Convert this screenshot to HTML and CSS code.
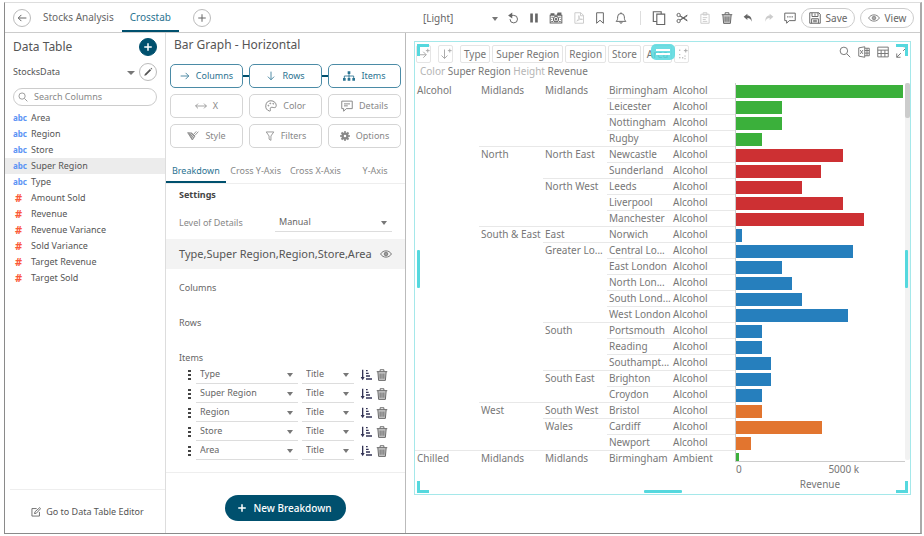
FILE: index.html
```html
<!DOCTYPE html>
<html lang="en">
<head>
<meta charset="utf-8">
<title>Stocks Analysis - Crosstab</title>
<link rel="stylesheet" href="styles.css">
</head>
<body>
<svg class="sprite" aria-hidden="true">
  <symbol id="i-left" viewBox="0 0 16 16"><path d="M15 8H2M7 3L2 8l5 5"/></symbol>
  <symbol id="i-right" viewBox="0 0 16 16"><path d="M1 8h13M9 3l5 5-5 5"/></symbol>
  <symbol id="i-down" viewBox="0 0 16 16"><path d="M8 1v13M3 9l5 5 5-5"/></symbol>
  <symbol id="i-wide" viewBox="0 0 20 16"><path d="M1 8h18M5 4L1 8l4 4M15 4l4 4-4 4"/></symbol>
  <symbol id="i-plus" viewBox="0 0 16 16"><path d="M8 2v12M2 8h12"/></symbol>
  <symbol id="i-pencil" viewBox="0 0 16 16"><path class="solid" d="M2 14l1-3 8-8 2 2-8 8zM12 2l1-1 2 2-1 1z"/></symbol>
  <symbol id="i-search" viewBox="0 0 16 16"><circle cx="6.5" cy="6.5" r="5"/><path d="M10.500 10.500L15 15"/></symbol>
  <symbol id="i-refresh" viewBox="0 0 16 16"><path d="M4 4.500h5a5 5 0 1 1-5 5"/><path class="solid" d="M1.500 4.500L7 .500v8z"/></symbol>
  <symbol id="i-pause" viewBox="0 0 16 16"><path class="solid" d="M3 2h3.500v12H3zM9.500 2H13v12H9.500z"/></symbol>
  <symbol id="i-camera" viewBox="0 0 18 16"><path d="M1.500 4.500h15v10h-15z"/><path class="solid" d="M10 4l1-3h5v3zM2 2h5v2H2z"/><circle cx="9" cy="9.500" r="3.300"/><circle cx="9" cy="9.500" r="1"/><path d="M3 7h2M3 10h1M3 12.500h2M13 7h2M14 10h1M13 12.500h2"/></symbol>
  <symbol id="i-pdf" viewBox="0 0 16 16"><path d="M2.500 1h8l3.500 3.500V15H2.500zM10 1v4h4M5 12c3-2 4-6 3-7s-1 5 4 5c2 0 0-2-7 2z"/></symbol>
  <symbol id="i-bookmark" viewBox="0 0 16 16"><path d="M3.500 1h9v14L8 11l-4.500 4z"/></symbol>
  <symbol id="i-bell" viewBox="0 0 16 16"><path d="M1.500 12.500c2-2 2-3 2-6a4.500 4.500 0 0 1 9 0c0 3 0 4 2 6zM6.500 13.500a1.500 1.500 0 0 0 3 0M8 2V.500"/></symbol>
  <symbol id="i-copy" viewBox="0 0 16 16"><path d="M5.500 3.500h9v12h-9zM5 12H1.500V.800h9V3"/></symbol>
  <symbol id="i-cut" viewBox="0 0 16 16"><circle cx="3.500" cy="4" r="2.200"/><circle cx="3.500" cy="12" r="2.200"/><path d="M5.500 5.500L15 12M5.500 10.500L15 4M5.500 5l9.500 6M5.500 11L15 5"/></symbol>
  <symbol id="i-paste" viewBox="0 0 16 16"><path d="M2.500 3h11v12h-11zM5.500 1h5v3h-5zM5 7.500h6M5 10h4M5 12.500h6"/></symbol>
  <symbol id="i-trash" viewBox="0 0 16 16"><path class="tint" d="M2.500 4h11l-1 11h-9z"/><path d="M1 3.500h14M5.500 3V1h5v2M2.500 4l1 11.200h9l1-11.200M5.500 6v7M8 6v7M10.500 6v7"/></symbol>
  <symbol id="i-undo" viewBox="0 0 16 16"><path class="solid" d="M1 6l6-5v3c5 0 7 4 7 10-1.500-4-3-6-7-6v3z"/></symbol>
  <symbol id="i-comment" viewBox="0 0 16 16"><path d="M1 1.500h14v10H7L3.500 15v-3.500H1zM4 5.200h8M4 7.800h5"/></symbol>
  <symbol id="i-chat" viewBox="0 0 16 16"><path d="M1 1.500h14v10H7L3.500 15v-3.500H1zM4 6.500h2M7 6.500h2M10 6.500h2"/></symbol>
  <symbol id="i-save" viewBox="0 0 16 16"><path d="M1 1h12l2 2v12H1zM4 1v5h8V1M8 2v3M3.500 15V9h9v6M5.500 11h5M5.500 13h5"/></symbol>
  <symbol id="i-eye" viewBox="0 0 20 16"><path d="M1 8c4-7 14-7 18 0-4 7-14 7-18 0z"/><circle cx="10" cy="8" r="3"/><circle cx="10" cy="8" r="1"/></symbol>
  <symbol id="i-tree" viewBox="0 0 18 16"><path class="solid" d="M7 1h4v4H7zM0 11h4v4H0zM7 11h4v4H7zM14 11h4v4h-4z"/><path d="M9 5v6M2 11V8h14v3"/></symbol>
  <symbol id="i-palette" viewBox="0 0 16 16"><path d="M8 1a7 7 0 0 0-2 13.700c2 .3 1-2.200 1-3.200 0-2 2-2 4-1.500 2 .5 4 0 4-2.500C15 4 12 1 8 1z"/><circle cx="4.500" cy="7.500" r=".6"/><circle cx="7" cy="4.500" r=".6"/><circle cx="11" cy="5" r=".6"/></symbol>
  <symbol id="i-brush" viewBox="0 0 18 16"><path class="tint" d="M1 3l6 .5 5 4.500-4 6z"/><path d="M1 3l6 .5 5 4.500-4 6zM4 4l6 7M3 4l5 9M12 7l5-5.500M10 5.500L14 1M6 3.500l5 5"/></symbol>
  <symbol id="i-filter" viewBox="0 0 16 16"><path d="M2 1.500h12L9.500 8v7L6.500 13V8z"/></symbol>
  <symbol id="i-gear" viewBox="0 0 16 16"><path class="solid" d="M6.800 0h2.400v2.200l1.700.7L12.500 1.300l2.200 2.200-1.600 1.600.7 1.700H16v2.400h-2.200l-.7 1.700 1.600 1.600-2.200 2.200-1.600-1.600-1.700.7V16H6.800v-2.200l-1.700-.7-1.600 1.600-2.200-2.200 1.600-1.600-.7-1.700H0V6.800h2.200l.7-1.700-1.600-1.600 2.200-2.200 1.600 1.600 1.700-.7z"/><circle class="hole" cx="8" cy="8" r="2"/></symbol>
  <symbol id="i-sort" viewBox="0 0 18 16"><path class="thick" d="M4 0v13"/><path class="solid" d="M1 11h6l-3 5z"/><path class="thick" d="M9 1.500h2.500M9 5.500h4M9 9.500h6M9 14h9"/></symbol>
  <symbol id="i-edit" viewBox="0 0 16 16"><path d="M9 2.500H1.500v12h12V8M5.500 10.500l1-3L14 1l1.500 1.500L8.500 10z"/></symbol>
  <symbol id="i-addcol" viewBox="0 0 16 16"><path d="M1 9h10M7 5l4 4-4 4M13 1v5M10.500 3.500h5"/></symbol>
  <symbol id="i-addrow" viewBox="0 0 16 16"><path d="M6 2v12M2 10l4 4 4-4M13 1v5M10.500 3.500h5"/></symbol>
  <symbol id="i-additem" viewBox="0 0 16 16"><path d="M5 2v2M5 8v1.500M9 12v2M4 13h2M13 1v5M10.500 3.500h5M12 10v1.500M12 13.500v1.500"/></symbol>
  <symbol id="i-excel" viewBox="0 0 16 16"><path d="M1 2.500L9 1v14L1 13.500z"/><path d="M9 3h6v10H9M12 3v10M9 6h6M9 9.500h6M3 5.500l3.500 5M6.500 5.500L3 10.500"/></symbol>
  <symbol id="i-table" viewBox="0 0 16 16"><path d="M1 1.500h14v13H1zM1 5.500h14M5.500 5.500v9M10.500 5.500v9M1 10h14"/></symbol>
  <symbol id="i-expand" viewBox="0 0 16 16"><path d="M9.500 6.500L15 1M10 1h5v5M6.500 9.500L1 15M1 10v5h5"/></symbol>
</svg>

<div class="app">
  <header class="topbar">
    <button class="circle" aria-label="Back"><svg class="icon"><use href="#i-left"/></svg></button>
    <nav class="pages">
      <a href="#analysis">Stocks Analysis</a>
      <a href="#crosstab" class="current">Crosstab</a>
    </nav>
    <button class="circle" aria-label="Add page"><svg class="icon"><use href="#i-plus"/></svg></button>
    <div class="theme drop"><select aria-label="Theme"><option>[Light]</option></select></div>
    <div class="tools">
      <button aria-label="Refresh"><svg class="icon"><use href="#i-refresh"/></svg></button>
      <button aria-label="Pause"><svg class="icon"><use href="#i-pause"/></svg></button>
      <button aria-label="Snapshot"><svg class="icon big"><use href="#i-camera"/></svg></button>
      <button aria-label="Export PDF" disabled><svg class="icon"><use href="#i-pdf"/></svg></button>
      <button aria-label="Bookmark"><svg class="icon"><use href="#i-bookmark"/></svg></button>
      <button aria-label="Alerts"><svg class="icon"><use href="#i-bell"/></svg></button>
    </div>
    <div class="tools edit">
      <button aria-label="Copy"><svg class="icon big"><use href="#i-copy"/></svg></button>
      <button aria-label="Cut"><svg class="icon"><use href="#i-cut"/></svg></button>
      <button aria-label="Paste" disabled><svg class="icon"><use href="#i-paste"/></svg></button>
      <button aria-label="Delete"><svg class="icon"><use href="#i-trash"/></svg></button>
      <button aria-label="Undo"><svg class="icon small"><use href="#i-undo"/></svg></button>
      <button aria-label="Redo" disabled><svg class="icon small flip"><use href="#i-undo"/></svg></button>
      <button aria-label="Comment"><svg class="icon"><use href="#i-chat"/></svg></button>
    </div>
    <button class="pill"><svg class="icon"><use href="#i-save"/></svg>Save</button>
    <button class="pill"><svg class="icon"><use href="#i-eye"/></svg>View</button>
  </header>

  <main class="work">
    <aside class="data">
      <div class="line">
        <h2>Data Table</h2>
        <button class="circle add" aria-label="Add data table"><svg class="icon"><use href="#i-plus"/></svg></button>
      </div>
      <div class="line source">
        <div class="drop"><select aria-label="Data table"><option>StocksData</option></select></div>
        <button class="circle" aria-label="Edit data table"><svg class="icon"><use href="#i-pencil"/></svg></button>
      </div>
      <div class="search">
        <svg class="icon"><use href="#i-search"/></svg>
        <input type="search" aria-label="Search Columns" placeholder="Search Columns">
      </div>
      <ul class="fields">
        <li><b>abc</b>Area</li>
        <li><b>abc</b>Region</li>
        <li><b>abc</b>Store</li>
        <li class="selected"><b>abc</b>Super Region</li>
        <li><b>abc</b>Type</li>
        <li><b class="num">#</b>Amount Sold</li>
        <li><b class="num">#</b>Revenue</li>
        <li><b class="num">#</b>Revenue Variance</li>
        <li><b class="num">#</b>Sold Variance</li>
        <li><b class="num">#</b>Target Revenue</li>
        <li><b class="num">#</b>Target Sold</li>
      </ul>
      <a class="editor" href="#editor"><svg class="icon"><use href="#i-edit"/></svg>Go to Data Table Editor</a>
    </aside>

    <section class="config">
      <h2>Bar Graph - Horizontal</h2>
      <div class="shelf">
        <button class="on"><svg class="icon"><use href="#i-right"/></svg>Columns</button>
        <button class="on"><svg class="icon"><use href="#i-down"/></svg>Rows</button>
        <button class="on"><svg class="icon big"><use href="#i-tree"/></svg>Items</button>
        <button><svg class="icon big"><use href="#i-wide"/></svg>X</button>
        <button><svg class="icon big"><use href="#i-palette"/></svg>Color</button>
        <button><svg class="icon big"><use href="#i-comment"/></svg>Details</button>
        <button><svg class="icon big"><use href="#i-brush"/></svg>Style</button>
        <button><svg class="icon"><use href="#i-filter"/></svg>Filters</button>
        <button><svg class="icon"><use href="#i-gear"/></svg>Options</button>
      </div>
      <nav class="tabs">
        <a href="#breakdown" class="current">Breakdown</a>
        <a href="#crossy">Cross Y-Axis</a>
        <a href="#crossx">Cross X-Axis</a>
        <a href="#yaxis">Y-Axis</a>
      </nav>
      <h3>Settings</h3>
      <div class="detail">
        <label for="level">Level of Details</label>
        <div class="drop under"><select id="level"><option>Manual</option></select></div>
      </div>
      <div class="band"><span>Type,Super Region,Region,Store,Area</span><button aria-label="Show"><svg class="icon big"><use href="#i-eye"/></svg></button></div>
      <h4>Columns</h4>
      <h4>Rows</h4>
      <h4 class="last">Items</h4>
      <ul class="items">
        <li><i class="grip"></i><div class="drop under"><select aria-label="Item 1"><option>Type</option></select></div><div class="drop under short"><select aria-label="Item 1 label"><option>Title</option></select></div><button class="sort" aria-label="Sort"><svg class="icon big"><use href="#i-sort"/></svg></button><button aria-label="Remove"><svg class="icon"><use href="#i-trash"/></svg></button></li>
        <li><i class="grip"></i><div class="drop under"><select aria-label="Item 2"><option>Super Region</option></select></div><div class="drop under short"><select aria-label="Item 2 label"><option>Title</option></select></div><button class="sort" aria-label="Sort"><svg class="icon big"><use href="#i-sort"/></svg></button><button aria-label="Remove"><svg class="icon"><use href="#i-trash"/></svg></button></li>
        <li><i class="grip"></i><div class="drop under"><select aria-label="Item 3"><option>Region</option></select></div><div class="drop under short"><select aria-label="Item 3 label"><option>Title</option></select></div><button class="sort" aria-label="Sort"><svg class="icon big"><use href="#i-sort"/></svg></button><button aria-label="Remove"><svg class="icon"><use href="#i-trash"/></svg></button></li>
        <li><i class="grip"></i><div class="drop under"><select aria-label="Item 4"><option>Store</option></select></div><div class="drop under short"><select aria-label="Item 4 label"><option>Title</option></select></div><button class="sort" aria-label="Sort"><svg class="icon big"><use href="#i-sort"/></svg></button><button aria-label="Remove"><svg class="icon"><use href="#i-trash"/></svg></button></li>
        <li><i class="grip"></i><div class="drop under"><select aria-label="Item 5"><option>Area</option></select></div><div class="drop under short"><select aria-label="Item 5 label"><option>Title</option></select></div><button class="sort" aria-label="Sort"><svg class="icon big"><use href="#i-sort"/></svg></button><button aria-label="Remove"><svg class="icon"><use href="#i-trash"/></svg></button></li>
      </ul>
      <div class="create"><button><svg class="icon"><use href="#i-plus"/></svg>New Breakdown</button></div>
    </section>

    <section class="canvas">
      <div class="part">
        <div class="chips">
          <button class="chip icon-chip" aria-label="Add column"><svg class="icon"><use href="#i-addcol"/></svg></button>
          <button class="chip icon-chip" aria-label="Add row"><svg class="icon"><use href="#i-addrow"/></svg></button>
          <button class="chip">Type</button>
          <button class="chip">Super Region</button>
          <button class="chip">Region</button>
          <button class="chip">Store</button>
          <button class="chip">Area</button>
          <button class="chip icon-chip" aria-label="Add item"><svg class="icon"><use href="#i-additem"/></svg></button>
          <div class="actions">
            <button aria-label="Search"><svg class="icon"><use href="#i-search"/></svg></button>
            <button aria-label="Export to Excel"><svg class="icon"><use href="#i-excel"/></svg></button>
            <button aria-label="Show table"><svg class="icon"><use href="#i-table"/></svg></button>
            <button aria-label="Expand"><svg class="icon"><use href="#i-expand"/></svg></button>
          </div>
        </div>
        <p class="legend"><span>Color</span> Super Region <span>Height</span> Revenue</p>
        <div class="chart">
          <table>
            <tbody>
              <tr><td rowspan="23">Alcohol</td><td rowspan="4">Midlands</td><td rowspan="4">Midlands</td><td>Birmingham</td><td>Alcohol</td></tr>
              <tr><td>Leicester</td><td>Alcohol</td></tr>
              <tr><td>Nottingham</td><td>Alcohol</td></tr>
              <tr><td>Rugby</td><td>Alcohol</td></tr>
              <tr><td rowspan="5">North</td><td rowspan="2">North East</td><td>Newcastle</td><td>Alcohol</td></tr>
              <tr><td>Sunderland</td><td>Alcohol</td></tr>
              <tr><td rowspan="3">North West</td><td>Leeds</td><td>Alcohol</td></tr>
              <tr><td>Liverpool</td><td>Alcohol</td></tr>
              <tr><td>Manchester</td><td>Alcohol</td></tr>
              <tr><td rowspan="11">South &amp; East</td><td>East</td><td>Norwich</td><td>Alcohol</td></tr>
              <tr><td rowspan="5">Greater Lo...</td><td>Central Lo...</td><td>Alcohol</td></tr>
              <tr><td>East London</td><td>Alcohol</td></tr>
              <tr><td>North Lon...</td><td>Alcohol</td></tr>
              <tr><td>South Lond...</td><td>Alcohol</td></tr>
              <tr><td>West London</td><td>Alcohol</td></tr>
              <tr><td rowspan="3">South</td><td>Portsmouth</td><td>Alcohol</td></tr>
              <tr><td>Reading</td><td>Alcohol</td></tr>
              <tr><td>Southampt...</td><td>Alcohol</td></tr>
              <tr><td rowspan="2">South East</td><td>Brighton</td><td>Alcohol</td></tr>
              <tr><td>Croydon</td><td>Alcohol</td></tr>
              <tr><td rowspan="3">West</td><td>South West</td><td>Bristol</td><td>Alcohol</td></tr>
              <tr><td rowspan="2">Wales</td><td>Cardiff</td><td>Alcohol</td></tr>
              <tr><td>Newport</td><td>Alcohol</td></tr>
              <tr class="end"><td>Chilled</td><td>Midlands</td><td>Midlands</td><td>Birmingham</td><td>Ambient</td></tr>
            </tbody>
          </table>
          <div class="plot">
            <div class="bars">
              <div class="bar green" style="width:99%"></div>
              <div class="bar green" style="width:27%"></div>
              <div class="bar green" style="width:27%"></div>
              <div class="bar green" style="width:15.3%"></div>
              <div class="bar red" style="width:63.2%"></div>
              <div class="bar red" style="width:50%"></div>
              <div class="bar red" style="width:39.2%"></div>
              <div class="bar red" style="width:63.6%"></div>
              <div class="bar red" style="width:75.5%"></div>
              <div class="bar blue" style="width:3.5%"></div>
              <div class="bar blue" style="width:69.4%"></div>
              <div class="bar blue" style="width:27%"></div>
              <div class="bar blue" style="width:33.1%"></div>
              <div class="bar blue" style="width:39.2%"></div>
              <div class="bar blue" style="width:66%"></div>
              <div class="bar blue" style="width:15.3%"></div>
              <div class="bar blue" style="width:15.3%"></div>
              <div class="bar blue" style="width:20.8%"></div>
              <div class="bar blue" style="width:20.8%"></div>
              <div class="bar blue" style="width:15.3%"></div>
              <div class="bar orange" style="width:15.3%"></div>
              <div class="bar orange" style="width:50.6%"></div>
              <div class="bar orange" style="width:9.1%"></div>
              <div class="bar green" style="width:2%"></div>
            </div>
            <div class="ticks"><span>0</span><span class="max">5000 k</span></div>
            <div class="axis">Revenue</div>
          </div>
          <div class="scroll"><div class="thumb"></div></div>
        </div>
        <i class="corner tl"></i><i class="corner tr"></i><i class="corner bl"></i><i class="corner br"></i>
        <i class="side left"></i><i class="side right"></i><i class="side bottom"></i>
        <i class="handle"></i>
      </div>
    </section>
  </main>
</div>
</body>
</html>
```
FILE: styles.css
```css
*, *::before { box-sizing: border-box; }
body {
  margin: 0;
  background: #fff;
  color: #666;
  font: 10px/16px "Noto Sans", sans-serif;
}
button, select, input { font: inherit; color: inherit; border: 0; padding: 0; margin: 0; background: none; }
h2, h3, h4, ul, p { margin: 0; padding: 0; font-weight: 400; }
ul { list-style: none; }
a { color: inherit; text-decoration: none; }
i { display: block; }

.sprite { position: absolute; width: 0; height: 0; }
.icon { width: 12px; height: 12px; flex: none; display: block; fill: none; stroke: currentColor; stroke-width: 1.3; }
.icon.big { width: 14px; height: 14px; }
.icon.small { width: 10px; height: 10px; }
.icon.flip { transform: scaleX(-1); }
.solid { fill: currentColor; stroke: none; }
.tint { fill: currentColor; fill-opacity: .35; stroke: none; }
.thick { stroke-width: 2; }
.hole { fill: #fff; stroke: none; }

.app {
  display: flex;
  flex-direction: column;
  height: calc(100vh - 4px);
  margin: 2px 2px 2px 4px;
  border: 1px solid #8a8a8a;
  border-top-color: #ddd;
  border-right: 2px solid #aaa;
}

/* top bar */
.topbar {
  display: flex;
  align-items: center;
  height: 30px;
  padding: 0 6px 0 8px;
  border-bottom: 1px solid #ccc;
  flex: none;
}
.circle {
  display: flex;
  align-items: center;
  justify-content: center;
  width: 18px;
  height: 18px;
  flex: none;
  border: 1px solid #bbb;
  border-radius: 50%;
}
.circle .icon { width: 10px; height: 10px; stroke-width: 1.6; }
.pages { display: flex; align-self: stretch; margin: 0 14px 0 4px; }
.pages a { padding: 6px 8px 0; border-bottom: 2px solid transparent; }
.pages a.current { color: #2b7391; border-color: #00506e; }
.drop { position: relative; }
.drop select { appearance: none; width: 100%; display: block; height: 16px; outline: 0; }
.drop::after {
  content: "";
  position: absolute;
  right: 5px;
  top: 7px;
  border: 3px solid transparent;
  border-top: 4px solid #777;
  border-bottom: 0;
  pointer-events: none;
}
.theme { width: 78px; margin-left: auto; }
.theme::after { right: 3px; }
.tools { display: flex; align-items: center; justify-content: space-between; width: 120px; margin-left: 6px; }
.tools button { color: #666; }
.tools button:disabled { color: #ccc; }
.tools.edit { width: 156px; margin-left: 13px; padding-left: 11px; border-left: 1px solid #ddd; }
.pill {
  display: flex;
  align-items: center;
  justify-content: center;
  gap: 5px;
  width: 54px;
  height: 20px;
  margin-left: 5px;
  border: 1px solid #ccc;
  border-radius: 10px;
}

.work { display: flex; flex: 1; min-height: 0; }

/* data panel */
.data { width: 161px; flex: none; display: flex; flex-direction: column; padding-top: 5px; border-right: 1px solid #ddd; font-size: 9px; color: #555; }
h2 { font-size: 12px; color: #555; }
.line { display: flex; align-items: center; justify-content: space-between; padding: 0 8px; }
.add { background: #00506e; border-color: #00506e; color: #fff; }
.add .icon { stroke-width: 2.4; }
.source { margin-top: 7px; }
.source .drop { flex: 1; }
.source .drop::after { right: 4px; border-width: 4px 4px 0; }
.search {
  display: flex;
  align-items: center;
  gap: 6px;
  height: 18px;
  margin: 7px 8px 4px;
  padding-left: 4px;
  border: 1px solid #ccc;
  border-radius: 9px;
  color: #888;
}
.search .icon { width: 10px; height: 10px; }
.search input { flex: 1; min-width: 0; outline: 0; height: 14px; appearance: none; }
.search input::placeholder { color: #888; opacity: 1; }
.fields li { display: flex; height: 16px; padding-left: 8px; }
.fields .selected { background: #ececec; }
.fields b { width: 18px; color: #5b93f5; font-size: 8px; font-weight: 700; line-height: 15px; }
.fields .num { color: #fb5a3a; font-size: 11px; padding-left: 2px; }
.editor {
  display: flex;
  align-items: center;
  justify-content: center;
  gap: 5px;
  height: 44px;
  margin-top: auto;
  margin-left: 5px;
  border-top: 1px solid #eee;
}
.editor .icon { width: 10px; height: 10px; }

/* configuration panel */
.config { width: 240px; flex: none; display: flex; flex-direction: column; border-right: 1px solid #bbb; font-size: 9px; }
.config h2 { padding: 4px 8px 11px; }
.shelf { display: grid; grid-template-columns: repeat(3, 1fr); gap: 6px; padding: 0 4px; }
.shelf button {
  position: relative;
  display: flex;
  align-items: center;
  justify-content: center;
  gap: 6px;
  height: 24px;
  border: 1px solid #d5d5d5;
  border-radius: 5px;
  color: #888;
}
.shelf .on { border-color: #4b8ba6; color: #2b7391; }
.shelf .on + .on::before { content: ""; position: absolute; left: -7px; top: 10px; width: 6px; height: 2px; background: #00506e; }
.shelf .icon { width: 10px; height: 10px; }
.shelf .icon.big { width: 12px; height: 12px; }
.tabs { display: grid; grid-template-columns: repeat(4, 1fr); margin-top: 13px; border-bottom: 1px solid #eee; text-align: center; white-space: nowrap; color: #888; }
.tabs a { height: 22px; padding-top: 2px; border-bottom: 2px solid transparent; }
.tabs .current { color: #2b7391; border-color: #00506e; }
.config h3 { padding: 3px 13px 0; font-size: 9px; font-weight: 700; color: #444; }
.detail { display: flex; align-items: center; justify-content: space-between; padding: 11px 13px 7px; color: #888; }
.under { border-bottom: 1px solid #ddd; color: #666; height: 18px; }
.under select { padding-left: 4px; }
.detail .drop { width: 117px; }
.band { display: flex; align-items: center; justify-content: space-between; height: 30px; padding: 0 13px; background: #f3f3f3; font-size: 11px; white-space: nowrap; color: #555; }
.band .icon { width: 12px; height: 12px; }
.config h4 { padding: 11px 13px 8px; font-size: 9px; }
.config .last { padding-bottom: 0; line-height: 15px; }
.items { padding: 0 17px 12px 20px; border-bottom: 1px solid #eee; }
.items li { display: flex; align-items: center; gap: 4px; height: 19px; }
.items .drop { flex: 1; }
.items .short { flex: none; width: 52px; }
.items .sort { margin-left: 2px; color: #335; }
.items .icon { height: 12px; width: 12px; }
.grip { width: 3px; height: 12px; margin: 0 1px 0 2px; background: radial-gradient(circle, #444 45%, transparent 60%) 0 0 / 3px 4px; }
.create { display: flex; justify-content: center; padding-top: 22px; }
.create button {
  display: flex;
  align-items: center;
  gap: 6px;
  height: 26px;
  padding: 0 14px 0 12px;
  border-radius: 13px;
  background: #00506e;
  color: #fff;
  font-size: 10px;
  font-weight: 500;
}
.create .icon { width: 10px; height: 10px; stroke-width: 2.4; }

/* canvas */
.canvas { flex: 1; min-width: 0; padding: 8px 9px 38px 8px; }
.part { position: relative; height: 100%; border: 1px solid #a5e8ea; color: #777; display: flex; flex-direction: column; }
.chips { display: flex; gap: 2px; padding: 3px 2px 0 1px; }
.chip { height: 18px; padding: 0 3px; border: 1px solid #e5e5e5; border-radius: 2px; color: #757575; }
.icon-chip { width: 15px; padding: 0 1px; margin-right: 5px; color: #aaa; }
.actions { display: flex; gap: 7px; margin-left: auto; height: 14px; }
.legend { padding: 0 5px 4px; }
.legend span { color: #b5b5b5; }
.chart { display: flex; flex: 1; min-height: 0; }
table { width: 320px; flex: none; table-layout: fixed; border-collapse: separate; border-spacing: 0; align-self: flex-start; }
td { height: 16px; padding: 0 0 0 2px; line-height: 15px; vertical-align: top; white-space: nowrap; border-bottom: 1px solid #e8e8e8; }
.end td { border-color: transparent; }
.plot { flex: 1; min-width: 0; }
.bars { height: 379px; overflow: hidden; border-left: 1px solid #ccc; border-bottom: 1px solid #ccc; }
.bar { height: 13px; margin: 2px 0 3px; }
.bar + .bar { margin-top: 3px; }
.green { background: #3bb03b; }
.red { background: #cd3033; }
.blue { background: #267fbd; }
.orange { background: #e2752f; }
.ticks { position: relative; height: 15px; line-height: 15px; padding-left: 1px; }
.ticks .max { position: absolute; left: 64%; transform: translateX(-50%); }
.axis { text-align: center; line-height: 15px; }
.scroll { width: 5px; height: 377px; background: #f2f2f2; border-radius: 2px; }
.thumb { height: 35px; background: #ccc; border-radius: 2px; }

/* selection frame */
.corner, .side, .handle { position: absolute; }
.corner { width: 12px; height: 12px; border: 0 solid #55d8de; }
.tl { top: 2px; left: 2px; border-width: 3px 0 0 3px; }
.tr { top: 2px; right: 2px; border-width: 3px 3px 0 0; }
.bl { bottom: 1px; left: 2px; border-width: 0 0 3px 3px; }
.br { bottom: 1px; right: 2px; border-width: 0 3px 3px 0; }
.side { background: #55d8de; border-radius: 1px; }
.left, .right { top: 46%; width: 3px; height: 38px; }
.left { left: 2px; }
.right { right: 2px; }
.bottom { left: calc(50% - 19px); bottom: 1px; width: 38px; height: 3px; }
.handle { top: 2px; left: calc(50% - 12px); width: 24px; height: 16px; border-radius: 5px; background: #55d8ded9; }
.handle::before { content: ""; position: absolute; left: 5px; right: 5px; top: 5px; height: 6px; border: 2px solid #fff; border-width: 2px 0; }
```
